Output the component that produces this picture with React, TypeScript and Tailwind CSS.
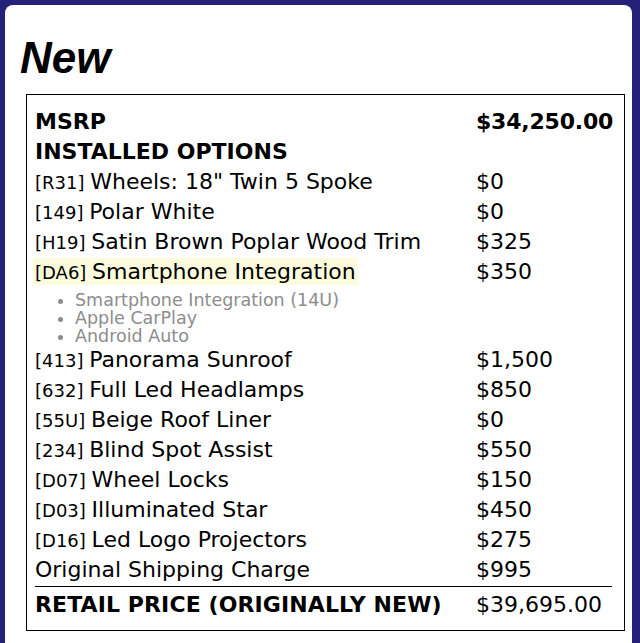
const items: { code?: string; name: string; price: string; hl?: boolean; subs?: string[] }[] = [
  { code: "R31", name: 'Wheels: 18" Twin 5 Spoke', price: "$0" },
  { code: "149", name: "Polar White", price: "$0" },
  { code: "H19", name: "Satin Brown Poplar Wood Trim", price: "$325" },
  {
    code: "DA6",
    name: "Smartphone Integration",
    price: "$350",
    hl: true,
    subs: ["Smartphone Integration (14U)", "Apple CarPlay", "Android Auto"],
  },
  { code: "413", name: "Panorama Sunroof", price: "$1,500" },
  { code: "632", name: "Full Led Headlamps", price: "$850" },
  { code: "55U", name: "Beige Roof Liner", price: "$0" },
  { code: "234", name: "Blind Spot Assist", price: "$550" },
  { code: "D07", name: "Wheel Locks", price: "$150" },
  { code: "D03", name: "Illuminated Star", price: "$450" },
  { code: "D16", name: "Led Logo Projectors", price: "$275" },
  { name: "Original Shipping Charge", price: "$995" },
];

export default function App() {
  return (
    <div className="h-[643px] overflow-hidden bg-[#25217a] pt-[5px] pl-[5px] pr-[8px]">
      <div className="h-[700px] rounded-lg bg-white pl-[15px] pr-[7px] pt-[29px] font-['DejaVu_Sans',sans-serif] text-black">
        <h1 className="font-['Liberation_Sans',Arial,sans-serif] text-[44px] leading-[48px] font-bold italic">
          New
        </h1>
        <div className="mt-[12px] ml-[6px] border border-black px-[8px] pt-[12px] pb-[10px]">
          <div className="grid grid-cols-[1fr_140px] whitespace-nowrap text-[22px] leading-[30px] font-bold">
            <div>MSRP</div>
            <div className="tracking-[-0.2px]">$34,250.00</div>
          </div>
          <div className="text-[22px] leading-[30px] font-bold">INSTALLED OPTIONS</div>
          {items.map((it) => (
            <div key={it.name}>
              <div className="grid h-[30px] grid-cols-[1fr_140px] text-[22px] leading-[30px]">
                <div className="whitespace-nowrap">
                  <span className={it.hl ? "-ml-[2px] bg-[#fcfcdc] px-[2px] py-[1px]" : ""}>
                    {it.code && <span className="text-[18px] leading-none">[{it.code}] </span>}
                    {it.name}
                  </span>
                </div>
                <div>{it.price}</div>
              </div>
              {it.subs && (
                <ul className="mt-[4px] list-disc pl-[40px] text-[17.5px] leading-[18px] text-[#8c8c8c]">
                  {it.subs.map((s) => (
                    <li key={s}>{s}</li>
                  ))}
                </ul>
              )}
            </div>
          ))}
          <div className="mt-[1px] mr-[4px] grid grid-cols-[1fr_136px] border-t border-black pt-[3px] text-[22px] leading-[30px]">
            <div className="font-bold tracking-[0.1px]">RETAIL PRICE (ORIGINALLY NEW)</div>
            <div>$39,695.00</div>
          </div>
        </div>
      </div>
    </div>
  );
}
